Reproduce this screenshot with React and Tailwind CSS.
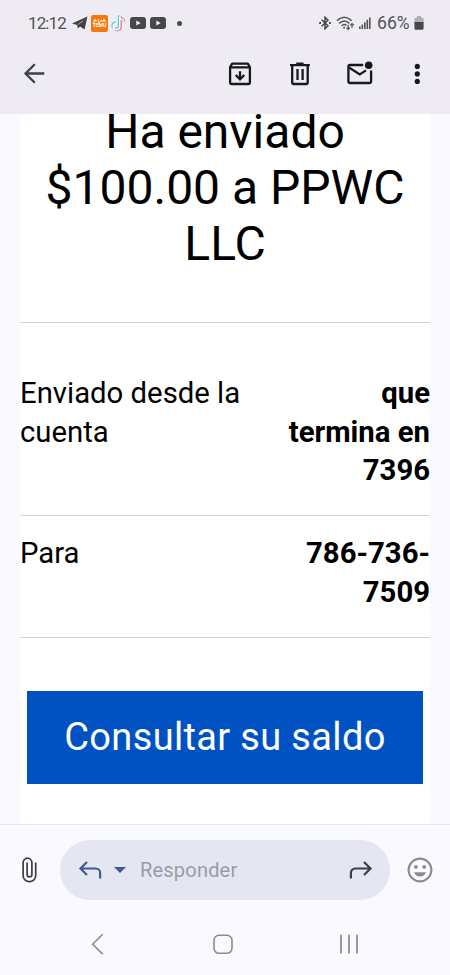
import React from 'react';

const StatusBar = () => (
  <div className="flex h-[46px] items-center pl-7 pr-[26px] text-[#535257]">
    <span className="w-[44px] whitespace-nowrap text-[17px] leading-5 tracking-[-0.9px]">12:12</span>
    <svg className="h-4 w-4" viewBox="0 0 16 16">
      <path d="M0 8.6 15.4 1.6 12.6 14.6 8 11.6 5.9 13.6 5 9.9Z" fill="#414045" />
      <path d="M5.6 9.8 11 5.8" fill="none" stroke="#eeecf2" strokeWidth=".6" />
    </svg>
    <div className="ml-[3px] flex h-[17px] w-[17px] flex-col items-center justify-center rounded-[2px] bg-[#f57a0b]">
      <svg className="h-[4px] w-[13px]" viewBox="0 0 13 4" fill="none" stroke="#fff" strokeWidth="1.2">
        <path d="M.5 3.5 2 .8 3.5 2.6M4.500 1h1.800M5 3h2M7.500 2.600 9 1M9.500 2.800 11 .8l1.500 2" />
      </svg>
      <span className="text-[5px] font-bold leading-[5px] text-white">TEMU</span>
    </div>
    <svg className="ml-[3px] h-[18px] w-4" viewBox="0 0 16 18" fill="none" strokeWidth="2.6">
      <path d="M8.100 1.600v10.200a3.200 3.200 0 1 1-3.200-3.300M8.100 1.800c.3 2.400 2 3.800 4.500 4" stroke="#60cdd5" />
      <path d="M9.500 2.600v10.200a3.300 3.300 0 0 1-6 1.800M9.500 2.800c.6 2 2 3.300 4.300 3.700" stroke="#e8657f" />
      <path d="M8.800 2.200v10.200a3.200 3.200 0 1 1-3.200-3.200M8.800 2.300c.5 2.400 2 3.800 4.500 4.100" stroke="#faf9fb" strokeWidth="1.600" />
    </svg>
    <svg className="ml-[3px] h-3 w-4" viewBox="0 0 16 12">
      <rect width="16" height="12" rx="3" fill="#48474b" />
      <path d="M6.300 3.400v5.200L10.700 6Z" fill="#f3f1f5" />
    </svg>
    <svg className="ml-[4px] h-3 w-4" viewBox="0 0 16 12">
      <rect width="16" height="12" rx="3" fill="#48474b" />
      <path d="M6.300 3.400v5.200L10.700 6Z" fill="#f3f1f5" />
    </svg>
    <span className="ml-[11px] h-[5px] w-[5px] rounded-full bg-[#48474b]" />
    <svg className="ml-auto h-[14px] w-[12px]" viewBox="0 0 12 14" fill="none" stroke="#48474b" strokeWidth="1.500">
      <path d="M2.600 3.800 9 9.700 6 12.700V1.300L9 4.300 2.600 10.200" />
      <path d="M.2 7h1.800M10 7h1.800" strokeWidth="1.800" />
    </svg>
    <svg className="ml-[5px] h-[15px] w-[19px]" viewBox="0 0 19 15" fill="none" stroke="#535257" strokeWidth="1.500">
      <path d="M1 4.600Q8.200-2 15.600 4.600M3.200 7.400Q8.200 2.600 13.400 7.400M5.600 9.800Q8.200 7.400 10.400 9.400" />
      <circle cx="8.100" cy="11.700" r="1" fill="#535257" stroke="none" />
      <path d="M12.200 8.700v4.600M10.600 11.700l1.600 1.800 1.600-1.800M16 12V7.600M14.300 9.300 16 7.500l1.800 1.800" strokeWidth="1.200" />
    </svg>
    <svg className="ml-[4px] h-3 w-3" viewBox="0 0 12 12" fill="#535257">
      <path d="M0 9.400h1.600V12H0zM2.500 7.400h1.600V12H2.500zM5 5.200h1.600V12H5zM7.500 2.800h1.600V12H7.500zM10 .4h1.600V12H10z" />
    </svg>
    <span className="ml-[6px] w-[37px] whitespace-nowrap text-[17.500px] leading-5 tracking-[0.1px]">66%</span>
    <svg className="h-[14px] w-[10px]" viewBox="0 0 10 14">
      <path d="M3 0h4v1.500h1.200A1.600 1.600 0 0 1 9.600 3v3H.4V3A1.600 1.600 0 0 1 2 1.500h1Z" fill="#b2b0b6" />
      <path d="M.4 6h9.200v6.200A1.600 1.600 0 0 1 8 13.800H2A1.600 1.600 0 0 1 .4 12.200Z" fill="#48474b" />
    </svg>
  </div>
);

const Toolbar = () => (
  <div className="flex h-[68px] items-start pl-5 pr-[19px] pt-[14px]">
    <button type="button" aria-label="Atrás">
      <svg className="h-7 w-7" viewBox="0 0 28 28" fill="none" stroke="#3d3f49" strokeWidth="2.300">
        <path d="M24.300 13.500H5.500M14.800 4.300 5.500 13.500l9.300 9.200" />
      </svg>
    </button>
    <div className="ml-auto flex">
      <button type="button" aria-label="Archivar">
        <svg className="h-7 w-7" viewBox="0 0 28 28" fill="none" stroke="#17171d" strokeWidth="2.300">
          <path d="M4.100 7 6.200 3.600h15.600L23.900 7v15.400a1.600 1.600 0 0 1-1.600 1.600H5.700a1.600 1.600 0 0 1-1.600-1.600Z" strokeLinejoin="round" />
          <path d="M4.300 7.300h19.400M14 11.300v7.300M9.700 15 14 19.300l4.300-4.300" />
        </svg>
      </button>
      <button type="button" aria-label="Eliminar" className="ml-8">
        <svg className="h-7 w-7" viewBox="0 0 28 28" fill="none" stroke="#17171d" strokeWidth="2.300">
          <path d="M4 5.100h19.800M6.200 5.500v16.900A1.600 1.600 0 0 0 7.800 24h12.300a1.600 1.600 0 0 0 1.600-1.600V5.500M11.500 9v11M16.600 9v11" />
          <path d="M10.200 3.700h7.400" />
        </svg>
      </button>
      <button type="button" aria-label="Marcar como no leído" className="ml-8">
        <svg className="h-7 w-7" viewBox="0 0 28 28" fill="none" stroke="#17171d" strokeWidth="2.300">
          <path d="M17.200 5H4.100A1.700 1.700 0 0 0 2.400 6.700v14.700A1.700 1.700 0 0 0 4.100 23h19.300a1.700 1.700 0 0 0 1.700-1.600V10.400" />
          <path d="M3 7.500l10.800 7 6.200-4.100" />
          <circle cx="22.700" cy="5.300" r="3.800" fill="#17171d" stroke="none" />
        </svg>
      </button>
      <button type="button" aria-label="Más opciones" className="ml-[29px]">
        <svg className="h-7 w-7" viewBox="0 0 28 28" fill="#17171d">
          <circle cx="14.300" cy="6.400" r="2.600" />
          <circle cx="14.300" cy="13.900" r="2.600" />
          <circle cx="14.300" cy="21.400" r="2.600" />
        </svg>
      </button>
    </div>
  </div>
);

const MailBody = () => (
  <main className="h-[710px] px-5">
    <div className="flex h-full flex-col bg-white">
      <h1 className="-mt-[10px] text-center text-[48px] leading-14 whitespace-nowrap">
        Ha enviado
        <br />
        $100.00 a PPWC
        <br />
        LLC
      </h1>
      <div className="mt-[50px] border-b border-[#d3d3d3]" />
      <div className="flex h-[193px] justify-between border-b border-[#d3d3d3] pt-[51px] text-[29.300px] leading-[38.500px]">
        <span>
          Enviado desde la
          <br />
          cuenta
        </span>
        <b className="text-right">
          que
          <br />
          termina en
          <br />
          7396
        </b>
      </div>
      <div className="flex h-[122px] justify-between border-b border-[#d3d3d3] pt-[18px] text-[29.300px] leading-[38.500px]">
        <span>Para</span>
        <b className="text-right">
          786-736-
          <br />
          7509
        </b>
      </div>
      <button
        type="button"
        className="mx-[7px] mt-[53px] flex h-[93px] items-center justify-center bg-[#0052c2] text-[38px] tracking-[0.350px] text-white whitespace-nowrap"
      >
        Consultar su saldo
      </button>
    </div>
  </main>
);

const ReplyBar = () => (
  <div className="flex h-[90px] items-center border-t border-[#e9e7ee] pl-[20px] pr-[17px]">
    <svg className="h-7 w-[18px]" viewBox="0 0 18 28" fill="none" stroke="#3c3c42" strokeWidth="1.700">
      <path d="M15.700 6.500v12.900a6.300 6.300 0 0 1-12.600 0V6.600a4.400 4.400 0 0 1 8.800 0v11.800a2.400 2.400 0 0 1-4.800 0V6.500" />
    </svg>
    <div className="ml-[22px] flex h-[60px] w-[330px] items-center rounded-full bg-[#e4e7f1] pl-[18px] pr-[17px]">
      <svg className="h-6 w-6" viewBox="0 0 24 24" fill="none" stroke="#3e5b92" strokeWidth="2.200">
        <path d="M9 4 2.500 10.500 9 17M2.500 10.500h15.300a4.300 4.300 0 0 1 4.300 4.300v5.700" />
      </svg>
      <svg className="ml-3 h-[6px] w-3" viewBox="0 0 12 6">
        <path d="M0 0h12L6 6Z" fill="#3e5b92" />
      </svg>
      <span className="ml-[14px] text-[20px] tracking-[0.200px] text-[#9a9ba6]">Responder</span>
      <svg className="ml-auto h-6 w-6" viewBox="0 0 24 24" fill="none" stroke="#3d3f49" strokeWidth="2.200">
        <path d="M15 4 21.500 10.500 15 17M21.500 10.500H6.200a4.300 4.300 0 0 0-4.300 4.300v5.700" />
      </svg>
    </div>
    <svg className="ml-auto h-[26px] w-[26px]" viewBox="0 0 26 26">
      <circle cx="13" cy="13" r="11.400" fill="none" stroke="#8c8c90" strokeWidth="2.100" />
      <circle cx="8.900" cy="9.900" r="1.900" fill="#8c8c90" />
      <circle cx="17.200" cy="9.900" r="1.900" fill="#8c8c90" />
      <path d="M7 15.300h12a6.400 6.400 0 0 1-12 0Z" fill="#8c8c90" />
    </svg>
  </div>
);

const NavBar = () => (
  <div className="flex h-[61px] items-start pl-[90px] pt-[18px]">
    <svg className="h-6 w-4" viewBox="0 0 16 24" fill="none" stroke="#8b8a8f" strokeWidth="1.600">
      <path d="M12.700 2.300 2.600 12.300l10.100 9.800" />
    </svg>
    <svg className="ml-[105px] h-6 w-6" viewBox="0 0 24 24" fill="none" stroke="#8b8a8f" strokeWidth="1.600">
      <rect x="3" y="3.300" width="18" height="18" rx="5" />
    </svg>
    <svg className="ml-[102px] h-6 w-6" viewBox="0 0 24 24" fill="none" stroke="#8b8a8f" strokeWidth="1.700">
      <path d="M4 2.800v18.800M12 2.800v18.800M20 2.800v18.800" />
    </svg>
  </div>
);

const App = () => {
  return (
    <div className="flex h-[975px] w-[450px] flex-col overflow-hidden bg-[#faf9ff] font-[Roboto,sans-serif] text-black">
      <header className="z-10 bg-[#eeecf2]">
        <StatusBar />
        <Toolbar />
      </header>
      <MailBody />
      <footer>
        <ReplyBar />
        <NavBar />
      </footer>
    </div>
  );
};

export default App;
